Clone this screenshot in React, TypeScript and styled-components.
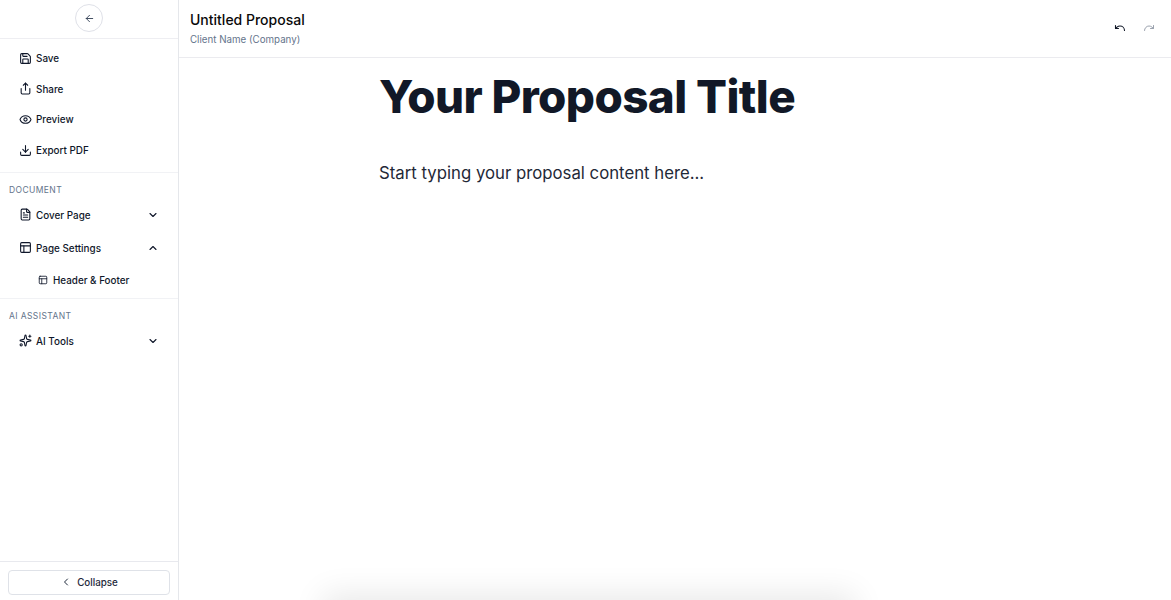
import { FC, ReactNode } from 'react';
import styled, { createGlobalStyle } from 'styled-components';
import {
  ArrowLeft, ChevronDown, ChevronLeft, ChevronUp, Download, Eye, FileText,
  PanelsTopLeft, Redo, Save, Share, Sparkles, Undo,
} from 'lucide-react';

const Global = createGlobalStyle`
  html, body { margin: 0; padding: 0; height: 100%; background: #fff; }
  body { font-family: Inter, "Liberation Sans", sans-serif; color: #0f172a; overflow: hidden; }
  #root { height: 100%; }
  * { box-sizing: border-box; }
`

const Shell = styled.div`
  display: flex;
  width: 1171px;
  height: 600px;
  overflow: hidden;
`

const Sidebar = styled.aside`
  width: 179px;
  flex: none;
  display: flex;
  flex-direction: column;
  border-right: 1px solid #e5e7eb;
`

const BackRow = styled.div`
  height: 39px;
  flex: none;
  padding-top: 4px;
  display: flex;
  justify-content: center;
  border-bottom: 1px solid #eeeef2;
`

const BackButton = styled.button`
  width: 28px;
  height: 28px;
  padding: 0;
  display: flex;
  align-items: center;
  justify-content: center;
  background: #fff;
  color: #334155;
  border: 1px solid #dfe1e8;
  border-radius: 50%;
`

const Section = styled.div`
  padding: 4px 0 3px;
  border-bottom: 1px solid #f1f2f5;
`

const Actions = styled(Section)`
  height: 134px;
`

const DocSection = styled(Section)`
  height: 126px;
  padding: 0;
`

const Grow = styled.div`
  flex: 1;
  padding: 0;
`

const Label = styled.div`
  height: 25px;
  padding: 11px 0 0 9px;
  font-size: 8.5px;
  line-height: 12px;
  font-weight: 400;
  letter-spacing: 0.4px;
  color: #64748b;
`

const Item = styled.div<{ $tall?: boolean }>`
  height: ${p => (p.$tall ? 33 : 30.6)}px;
  padding: 0 19px 0 19px;
  display: flex;
  align-items: center;
  gap: 4px;
  font-size: 9.9px;
  font-weight: 500;
  color: #0f172a;
  svg { flex: none; }
`

const ItemText = styled.span`
  flex: 1;
`

const SubItem = styled.div`
  height: 32px;
  padding: 0 0 0 38px;
  display: flex;
  align-items: center;
  gap: 5px;
  font-size: 9.85px;
  font-weight: 500;
`

const Footer = styled.div`
  height: 39px;
  flex: none;
  padding: 8px 8px 0 8px;
  border-top: 1px solid #e8e9ee;
`

const CollapseButton = styled.button`
  width: 100%;
  height: 25px;
  display: flex;
  align-items: center;
  justify-content: center;
  gap: 5px;
  padding: 0 0 1px;
  background: #fff;
  border: 1px solid #dfe2e8;
  border-radius: 4px;
  font-family: inherit;
  font-size: 9.8px;
  font-weight: 500;
  color: #1e293b;
`

const Main = styled.main`
  flex: 1;
  display: flex;
  flex-direction: column;
  min-width: 0;
`

const Header = styled.header`
  height: 58px;
  flex: none;
  padding: 0 16px 0 11px;
  display: flex;
  align-items: center;
  justify-content: space-between;
  border-bottom: 1px solid #ebebef;
`

const DocTitle = styled.div`
  font-size: 14px;
  line-height: 20px;
  font-weight: 500;
  color: #0a0a0a;
`

const DocClient = styled.div`
  margin-top: 3px;
  font-size: 9.75px;
  line-height: 14px;
  color: #64748b;
`

const History = styled.div`
  display: flex;
  align-items: center;
  gap: 17px;
  margin-bottom: 2px;
`

const Canvas = styled.div`
  flex: 1;
  min-height: 0;
  overflow: hidden;
  padding-left: 200px;
`

const Content = styled.div`
  height: 542px;
`

const Title = styled.h1`
  margin: 0;
  padding-top: 10px;
  font-size: 45.8px;
  line-height: 58px;
  font-weight: 800;
  letter-spacing: -0.6px;
  color: #111827;
`

const Body = styled.p`
  margin: 33px 0 0;
  font-size: 16.75px;
  line-height: 28px;
  color: #1f2937;
`

const NextSheet = styled.div`
  width: 520px;
  height: 200px;
  margin-left: -50px;
  background: #fff;
  box-shadow: 0 0 30px 6px rgba(0, 0, 0, 0.09);
`

const NavItem: FC<{ icon: ReactNode; text: string; trailing?: ReactNode; tall?: boolean }> = ({ icon, text, trailing, tall }) => (
  <Item $tall={tall}>
    {icon}
    <ItemText>{text}</ItemText>
    {trailing}
  </Item>
)

export default function App() {
  const ic = { size: 13, strokeWidth: 2 }
  const chev = { size: 12, strokeWidth: 2.2 }
  return (
    <Shell>
      <Global />
      <Sidebar>
        <BackRow>
          <BackButton><ArrowLeft size={11} strokeWidth={2} /></BackButton>
        </BackRow>
        <Actions>
          <NavItem icon={<Save {...ic} />} text="Save" />
          <NavItem icon={<Share {...ic} />} text="Share" />
          <NavItem icon={<Eye {...ic} />} text="Preview" />
          <NavItem icon={<Download {...ic} />} text="Export PDF" />
        </Actions>
        <DocSection>
          <Label>DOCUMENT</Label>
          <NavItem tall icon={<FileText {...ic} />} text="Cover Page" trailing={<ChevronDown {...chev} />} />
          <NavItem tall icon={<PanelsTopLeft {...ic} />} text="Page Settings" trailing={<ChevronUp {...chev} />} />
          <SubItem><PanelsTopLeft size={10} strokeWidth={2} />Header &amp; Footer</SubItem>
        </DocSection>
        <Grow>
          <Label>AI ASSISTANT</Label>
          <NavItem tall icon={<Sparkles {...ic} />} text="AI Tools" trailing={<ChevronDown {...chev} />} />
        </Grow>
        <Footer>
          <CollapseButton><ChevronLeft size={12} strokeWidth={2} />Collapse</CollapseButton>
        </Footer>
      </Sidebar>
      <Main>
        <Header>
          <div>
            <DocTitle>Untitled Proposal</DocTitle>
            <DocClient>Client Name (Company)</DocClient>
          </div>
          <History>
            <Undo size={12} strokeWidth={2.2} color="#111827" />
            <Redo size={12} strokeWidth={2} color="#9ca3af" />
          </History>
        </Header>
        <Canvas>
          <Content>
            <Title>Your Proposal Title</Title>
            <Body>Start typing your proposal content here...</Body>
          </Content>
          <NextSheet />
        </Canvas>
      </Main>
    </Shell>
  )
}
